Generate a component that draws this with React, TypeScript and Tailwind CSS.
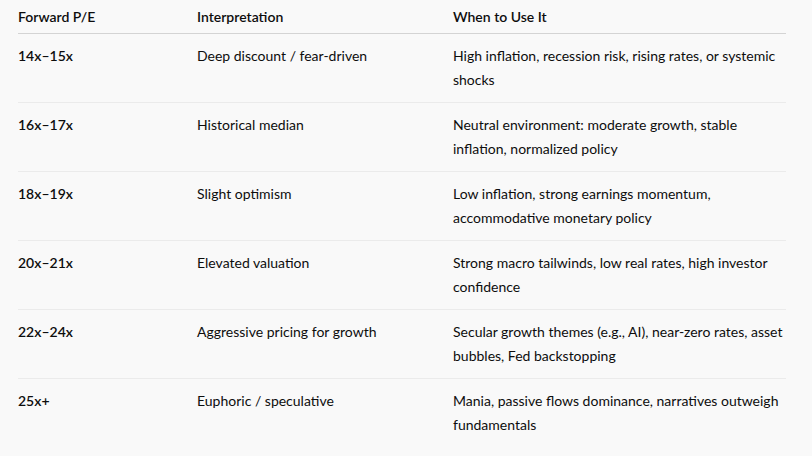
const rows = [
  {
    pe: '14x–15x',
    meaning: 'Deep discount / fear-driven',
    when: 'High inflation, recession risk, rising rates, or systemic shocks',
  },
  {
    pe: '16x–17x',
    meaning: 'Historical median',
    when: 'Neutral environment: moderate growth, stable inflation, normalized policy',
  },
  {
    pe: '18x–19x',
    meaning: 'Slight optimism',
    when: 'Low inflation, strong earnings momentum, accommodative monetary policy',
  },
  {
    pe: '20x–21x',
    meaning: 'Elevated valuation',
    when: 'Strong macro tailwinds, low real rates, high investor confidence',
  },
  {
    pe: '22x–24x',
    meaning: 'Aggressive pricing for growth',
    when: 'Secular growth themes (e.g., AI), near-zero rates, asset bubbles, Fed backstopping',
  },
  {
    pe: '25x+',
    meaning: 'Euphoric / speculative',
    when: 'Mania, passive flows dominance, narratives outweigh fundamentals',
  },
]

export default function App() {
  return (
    <div className="min-h-[456px] w-[812px] bg-[#f9f9f9] pl-[18px] text-[14px] leading-6 text-[#0d0d0d] [font-family:Lato,'Liberation_Sans',sans-serif]">
      <table className="w-[768px] table-fixed border-collapse">
        <colgroup>
          <col className="w-[179px]" />
          <col className="w-[256px]" />
          <col className="w-[333px]" />
        </colgroup>
        <thead>
          <tr className="border-b border-[#d4d4d4]">
            <th className="pt-[5px] pb-[4px] text-left font-semibold">Forward P/E</th>
            <th className="pt-[5px] pb-[4px] text-left font-semibold">Interpretation</th>
            <th className="pt-[5px] pb-[4px] text-left font-semibold">When to Use It</th>
          </tr>
        </thead>
        <tbody>
          {rows.map((r, i) => (
            <tr key={r.pe} className={i < rows.length - 1 ? 'border-b border-[#ebebeb]' : ''}>
              <td className="py-[10px] align-top font-semibold">{r.pe}</td>
              <td className="py-[10px] align-top">{r.meaning}</td>
              <td className="py-[10px] align-top">{r.when}</td>
            </tr>
          ))}
        </tbody>
      </table>
    </div>
  )
}
